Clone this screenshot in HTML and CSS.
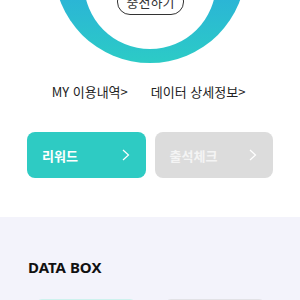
FILE: index.html
```html
<!DOCTYPE html>
<html lang="ko">

<head>
    <meta charset="UTF-8">
    <meta name="viewport" content="width=device-width, initial-scale=1.0">
    <title>My Data</title>
    <link rel="stylesheet" href="styles.css">
</head>

<body>
    <section class="top">
        <div class="gauge">
            <svg class="ring" width="300" height="64" viewBox="0 0 300 64">
                <defs>
                    <linearGradient id="ringGrad" x1="0" y1="0" x2="0" y2="1">
                        <stop offset="0" stop-color="#2a98e0" />
                        <stop offset="0.55" stop-color="#2aaedb" />
                        <stop offset="1" stop-color="#2ccbc6" />
                    </linearGradient>
                </defs>
                <circle cx="150" cy="-33" r="96" fill="url(#ringGrad)" />
                <circle cx="150" cy="-17" r="66" fill="#fff" />
            </svg>
            <button class="charge-btn">충전하기</button>
        </div>

        <nav class="links">
            <a href="#">MY 이용내역&gt;</a>
            <a href="#">데이터 상세정보&gt;</a>
        </nav>

        <div class="actions">
            <button class="action reward">
                <span>리워드</span>
                <svg width="8" height="12" viewBox="0 0 8 12"><polyline points="1,1 6.5,6 1,11" /></svg>
            </button>
            <button class="action check">
                <span>출석체크</span>
                <svg width="8" height="12" viewBox="0 0 8 12"><polyline points="1,1 6.5,6 1,11" /></svg>
            </button>
        </div>
    </section>

    <section class="data-box">
        <h2>DATA BOX</h2>
        <div class="cards">
            <div class="card card-teal"></div>
            <div class="card card-gray"></div>
        </div>
    </section>
</body>

</html>
```

FILE: styles.css
```css
body {
    margin: 0;
    padding: 0;
    font-family: "Noto Sans CJK KR", "Noto Sans", sans-serif;
    background-color: #fff;
    color: #222;
    overflow: hidden;
}

.top {
    background-color: #fff;
    padding-bottom: 39px;
}

.gauge {
    position: relative;
    height: 64px;
}

.ring {
    display: block;
}

.charge-btn {
    position: absolute;
    top: -12px;
    left: 117px;
    width: 67px;
    height: 27px;
    border: 1px solid #333;
    border-radius: 13px;
    background: #fff;
    font-family: inherit;
    font-size: 13px;
    color: #333;
    padding: 0;
}

.links {
    display: flex;
    justify-content: center;
    gap: 23px;
    margin-top: 19px;
    padding-right: 3px;
}

.links a {
    font-size: 13px;
    line-height: 18px;
    color: #222;
    text-decoration: none;
}

.actions {
    display: flex;
    gap: 9px;
    padding: 0 27px;
    margin-top: 31px;
}

.action {
    flex: 1;
    height: 46px;
    border: none;
    border-radius: 8px;
    display: flex;
    align-items: center;
    justify-content: space-between;
    padding: 0 16px 0 15px;
    font-family: inherit;
    font-size: 13px;
    font-weight: bold;
    color: #fff;
}

.action svg polyline {
    fill: none;
    stroke: #fff;
    stroke-width: 1.2;
}

.reward {
    background-color: #2ecbc3;
}

.check {
    background-color: #dcdcdc;
    color: #f4f4f4;
}

.data-box {
    background-color: #f3f3fb;
    padding: 40px 0 0;
    height: 100px;
}

.data-box h2 {
    margin: 0 0 0 28px;
    font-family: "Noto Sans", sans-serif;
    font-size: 15px;
    line-height: 20px;
    font-weight: bold;
    color: #111;
}

.cards {
    display: flex;
    gap: 29px;
    padding: 0 35px 0 36px;
    margin-top: 22px;
}

.card {
    flex: 1;
    height: 60px;
    border-radius: 6px;
    background-color: #fff;
}

.card-teal {
    border-top: 2px solid #cdf2ee;
}

.card-gray {
    border-top: 2px solid #e2e2e6;
}
```
